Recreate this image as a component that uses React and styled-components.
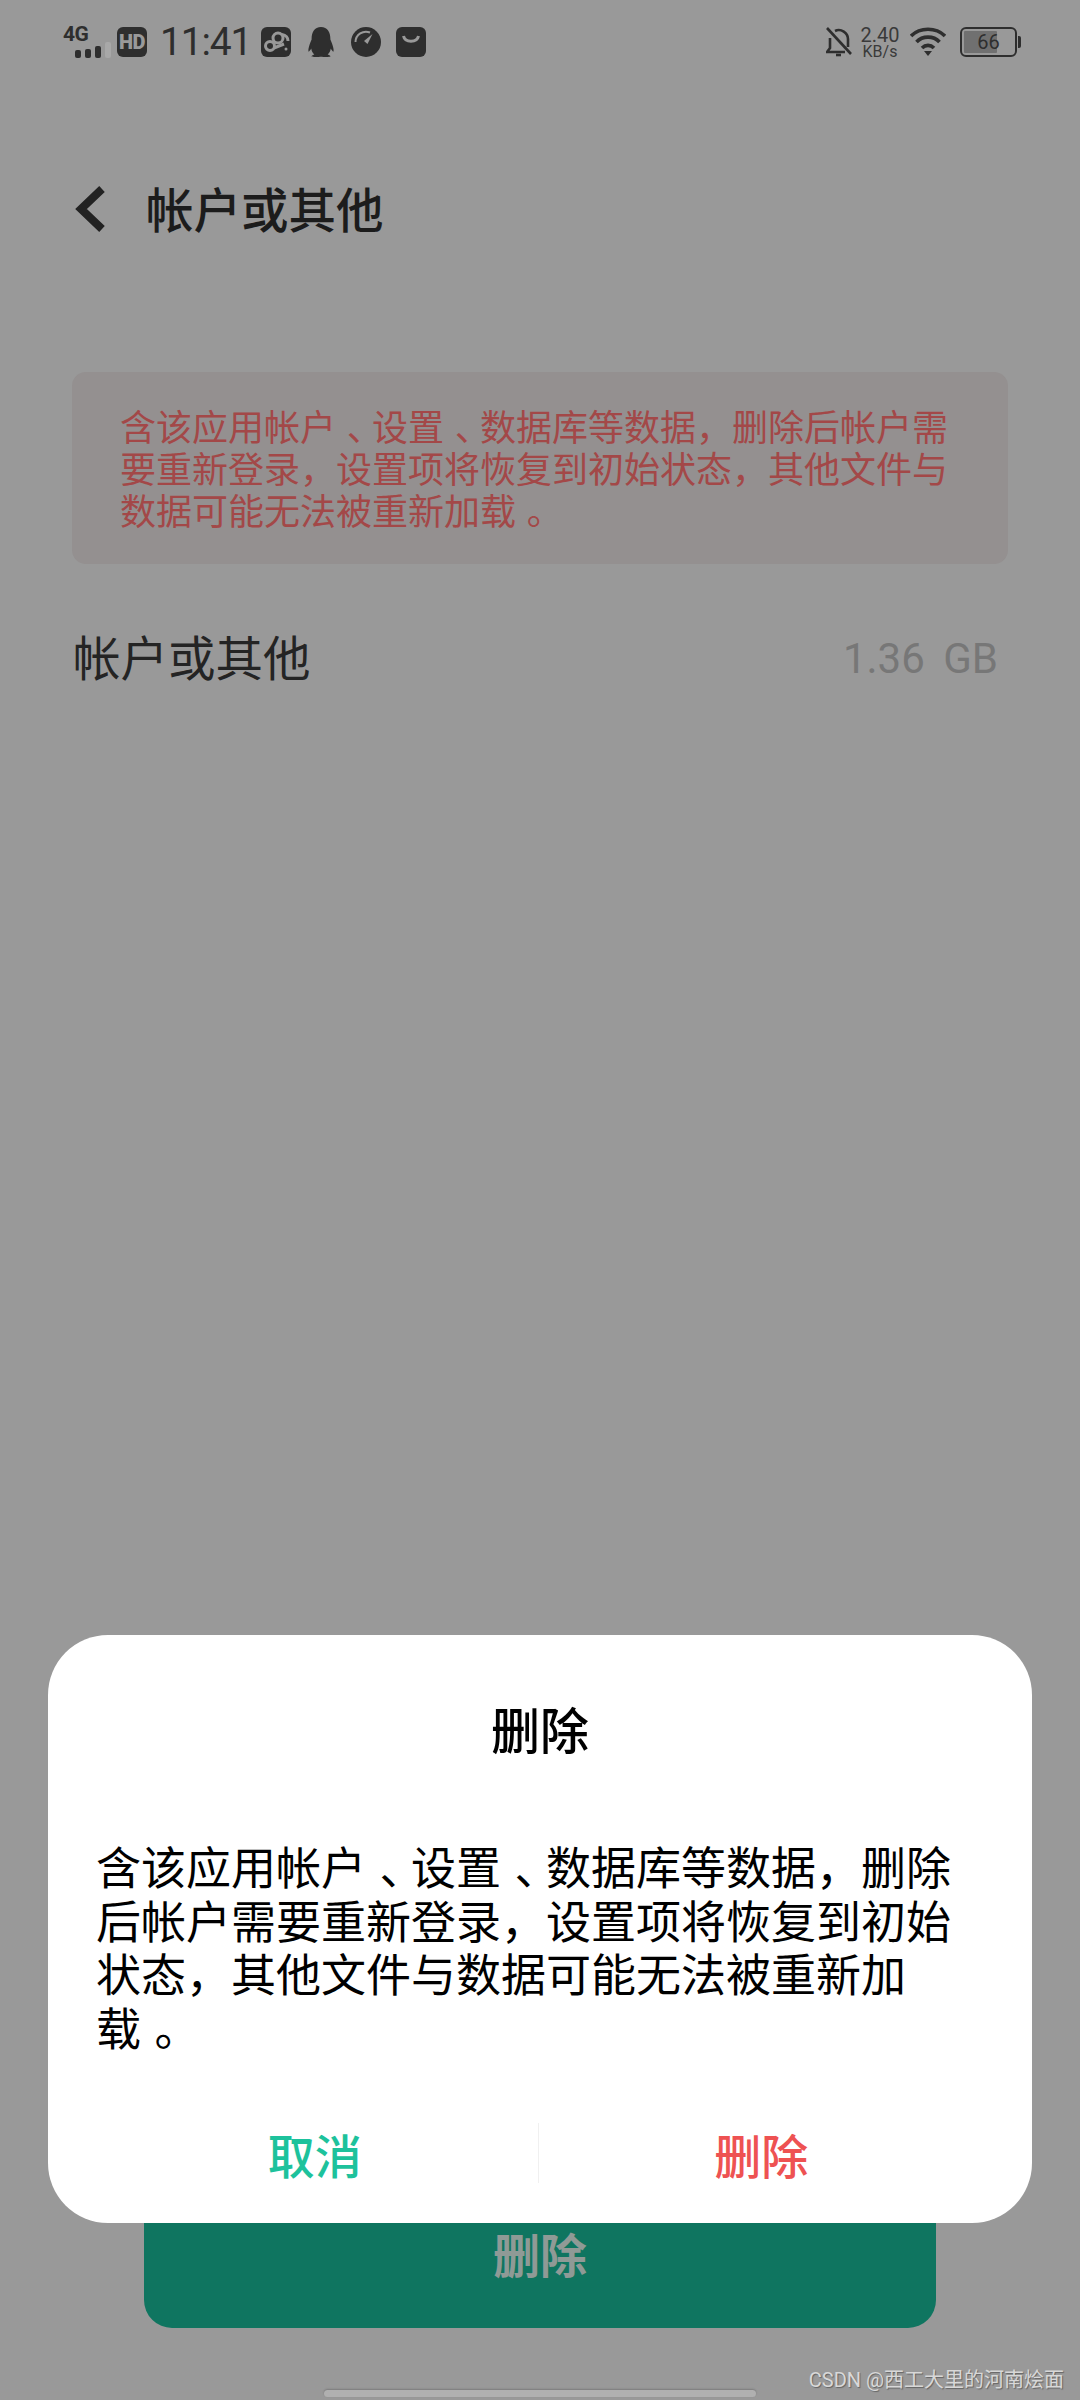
import React from 'react';
import styled, { createGlobalStyle } from 'styled-components';
import { FaQq } from 'react-icons/fa';

const GlobalStyle = createGlobalStyle`
  html, body {
    margin: 0;
    padding: 0;
    background-color: #999999;
  }
  * {
    box-sizing: border-box;
  }
`;

const CJK = `Roboto, "Noto Sans CJK SC", sans-serif`;

const Screen = styled.div`
  position: relative;
  display: flex;
  flex-direction: column;
  width: 1080px;
  height: 2400px;
  overflow: hidden;
  background-color: #999999;
  font-family: ${CJK};
  color: #1c1c1c;
`;

const StatusBar = styled.div`
  display: flex;
  align-items: center;
  justify-content: space-between;
  height: 84px;
  padding: 0 63px 0 63px;
  color: #2e2e2e;
`;
const StatusGroup = styled.div`
  display: flex;
  align-items: center;
`;
const Network = styled.div`
  display: flex;
  flex-direction: column;
  align-items: flex-start;
  width: 48px;
  height: 32px;
  margin-right: 6px;
`;
const NetworkLabel = styled.span`
  font-size: 21px;
  font-weight: 700;
  line-height: 16px;
  letter-spacing: -0.5px;
`;
const Signal = styled.div`
  display: flex;
  gap: 4px;
  align-items: flex-end;
  height: 16px;
  margin-left: 12px;
`;
const SignalBar = styled.span`
  width: 6px;
  border-radius: 2px;
  height: ${(props) => props.h}px;
  background-color: ${(props) => (props.off ? '#a8a8a8' : '#2e2e2e')};
`;
const HdBadge = styled.div`
  display: flex;
  align-items: center;
  justify-content: center;
  width: 30px;
  height: 30px;
  border-radius: 6px;
  background-color: #2e2e2e;
  color: #999999;
  font-size: 20px;
  font-weight: 900;
  letter-spacing: -0.5px;
`;
const Clock = styled.span`
  width: 86px;
  margin: 0 15px 0 13px;
  font-size: 39px;
  line-height: 40px;
  letter-spacing: -1.2px;
  white-space: nowrap;
`;
const AppIcons = styled.div`
  display: flex;
  align-items: center;
  gap: 15px;
  color: #2e2e2e;
  svg {
    display: block;
  }
`;
const Speed = styled.div`
  display: flex;
  flex-direction: column;
  align-items: center;
  width: 42px;
  margin: 0 9px 0 7px;
  color: #3a3a3a;
`;
const SpeedValue = styled.span`
  font-size: 20px;
  line-height: 19px;
`;
const SpeedUnit = styled.span`
  font-size: 16px;
  line-height: 14px;
`;
const Battery = styled.div`
  position: relative;
  display: flex;
  align-items: center;
  justify-content: center;
  width: 57px;
  height: 30px;
  margin-left: 14px;
  border: 2px solid #2e2e2e;
  border-radius: 6px;
  font-size: 20px;
  &::after {
    content: '';
    position: absolute;
    right: -6px;
    top: 7px;
    width: 3px;
    height: 12px;
    border-radius: 0 2px 2px 0;
    background-color: #2e2e2e;
  }
`;
const BatteryFill = styled.span`
  position: absolute;
  left: 2px;
  top: 2px;
  bottom: 2px;
  background-color: #707070;
  border-radius: 1px;
`;
const BatteryText = styled.span`
  position: relative;
  line-height: 20px;
`;

const Header = styled.div`
  display: flex;
  align-items: center;
  gap: 41px;
  height: 100px;
  margin-top: 75px;
  padding-left: 75px;
`;
const HeaderTitle = styled.h1`
  margin: 0;
  padding-top: 5px;
  font-size: 47.5px;
  font-weight: 500;
  line-height: 60px;
`;

const Notice = styled.div`
  display: flex;
  align-items: center;
  height: 192px;
  margin: 113px 72px 0 72px;
  padding: 5px 48px 0 48px;
  border-radius: 14px;
  background-color: #949090;
  color: #a34848;
  font-size: 36px;
  line-height: 42px;
`;
const TextLine = styled.div`
  white-space: nowrap;
`;

// 、 and 。 sit mid-cell in the reference font: half-width glyph plus padding keeps the 1em advance
const Punct = styled.span`
  font-feature-settings: "halt";
  padding-left: 0.3em;
  padding-right: 0.2em;
`;

const Row = styled.div`
  display: flex;
  align-items: center;
  justify-content: space-between;
  height: 100px;
  margin-top: 44px;
  padding: 0 82px 0 73px;
`;
const RowLabel = styled.span`
  margin-top: -6px;
  font-size: 47.5px;
  color: #242424;
`;
const RowValue = styled.span`
  font-size: 42px;
  color: #777777;
  word-spacing: 8px;
`;

const PrimaryButton = styled.div`
  display: flex;
  align-items: center;
  justify-content: center;
  width: 792px;
  height: 140px;
  margin: auto 144px 62px;
  padding-bottom: 11px;
  border-radius: 0 0 28px 28px;
  background-color: #0f7560;
  color: #8f9a96;
  font-size: 47px;
  font-weight: 700;
`;

const HomeBar = styled.div`
  width: 432px;
  height: 7px;
  margin: 0 auto 3px;
  border-radius: 4px;
  background-color: #b0b0b0;
  box-shadow: 0 -1px 2px rgba(0, 0, 0, 0.2);
`;

const Watermark = styled.div`
  position: absolute;
  right: 16px;
  bottom: 8px;
  color: #d8d8d8;
  font-size: 20px;
  line-height: 24px;
  text-shadow: 1px 1px 1px rgba(0, 0, 0, 0.35);
`;

const Dialog = styled.div`
  position: absolute;
  left: 48px;
  right: 48px;
  top: 1635px;
  display: flex;
  flex-direction: column;
  height: 588px;
  padding-top: 68px;
  border-radius: 60px;
  background-color: #ffffff;
  color: #000000;
`;
const DialogTitle = styled.div`
  font-size: 49px;
  font-weight: 500;
  line-height: 60px;
  text-align: center;
`;
const DialogBody = styled.div`
  margin-top: 80px;
  padding: 0 72px 0 48px;
  font-size: 45px;
  line-height: 53.5px;
`;
const DialogActions = styled.div`
  display: flex;
  align-items: center;
  height: 60px;
  margin-top: 66px;
`;
const DialogAction = styled.div`
  flex: 1;
  padding: ${(props) => props.pad};
  color: ${(props) => props.color};
  font-size: 47px;
  font-weight: 500;
  text-align: center;
`;
const ActionDivider = styled.span`
  width: 1px;
  height: 60px;
  background-color: #f0f0f0;
`;

const CloudIcon = () => (
  <svg width="30" height="30" viewBox="0 0 30 30">
    <rect width="30" height="30" rx="6" fill="#2e2e2e" />
    <circle cx="9" cy="19" r="4.5" fill="none" stroke="#999999" strokeWidth="3" />
    <circle cx="17" cy="11" r="5" fill="none" stroke="#999999" strokeWidth="3" />
    <path d="M12 15.5 L14 14 M21 7.5 C25 8 27 11 27 14 M13 21 L23 17" fill="none" stroke="#999999" strokeWidth="3" />
    <circle cx="25" cy="22" r="1.5" fill="#999999" />
  </svg>
);

const GaugeIcon = () => (
  <svg width="30" height="30" viewBox="0 0 30 30">
    <circle cx="15" cy="15" r="15" fill="#2e2e2e" />
    <path d="M4.5 15 A10.5 10.5 0 0 1 19 5.5" fill="none" stroke="#999999" strokeWidth="2" />
    <path d="M13 14 L21.5 7 L16.5 17 Z" fill="#999999" />
  </svg>
);

const BagIcon = () => (
  <svg width="30" height="30" viewBox="0 0 30 30">
    <rect width="30" height="30" rx="6" fill="#2e2e2e" />
    <path d="M7.5 9 C9 16 21 16 22.5 9" fill="none" stroke="#999999" strokeWidth="3" />
  </svg>
);

const BellOffIcon = () => (
  <svg width="26" height="30" viewBox="0 0 26 30" fill="none" stroke="#2e2e2e" strokeWidth="2.6">
    <path d="M4 11 V21 L1 25 H19" />
    <path d="M9 4 C15 1 22 6 22 12 V20" />
    <path d="M10 28 H15" />
    <path d="M1 1 L25 27" />
  </svg>
);

const WifiIcon = () => (
  <svg width="36" height="30" viewBox="0 0 36 30" fill="none" stroke="#2e2e2e" strokeWidth="3.6">
    <path d="M1 9 C10 0 26 0 35 9" />
    <path d="M6.5 15 C12.5 8.5 23.5 8.5 29.5 15" />
    <path d="M12 21 C15.5 17.5 20.5 17.5 24 21" />
    <path d="M14 24 L18 29 L22 24 Z" fill="#2e2e2e" stroke="none" />
  </svg>
);

const BackIcon = () => (
  <svg width="30" height="46" viewBox="0 0 30 46" fill="none" stroke="#222222" strokeWidth="8">
    <path d="M27 3 L6 23 L27 43" />
  </svg>
);

const noticeLines = [
  '含该应用帐户、设置、数据库等数据，删除后帐户需',
  '要重新登录，设置项将恢复到初始状态，其他文件与',
  '数据可能无法被重新加载。',
];
const dialogLines = [
  '含该应用帐户、设置、数据库等数据，删除',
  '后帐户需要重新登录，设置项将恢复到初始',
  '状态，其他文件与数据可能无法被重新加',
  '载。',
];

const Message = ({ lines }) => lines.map((line) => (
  <TextLine key={line}>
    {line.split(/([、。])/).map((part, i) => (
      i % 2 ? <Punct key={i}>{part}</Punct> : part
    ))}
  </TextLine>
));

const App = () => (
  <>
    <GlobalStyle />
    <Screen>
      <StatusBar>
        <StatusGroup>
          <Network>
            <NetworkLabel>4G</NetworkLabel>
            <Signal>
              <SignalBar h={8} />
              <SignalBar h={9} />
              <SignalBar h={12} />
              <SignalBar h={16} off />
            </Signal>
          </Network>
          <HdBadge>HD</HdBadge>
          <Clock>11:41</Clock>
          <AppIcons>
            <CloudIcon />
            <FaQq size={30} />
            <GaugeIcon />
            <BagIcon />
          </AppIcons>
        </StatusGroup>
        <StatusGroup>
          <BellOffIcon />
          <Speed>
            <SpeedValue>2.40</SpeedValue>
            <SpeedUnit>KB/s</SpeedUnit>
          </Speed>
          <WifiIcon />
          <Battery>
            <BatteryFill style={{ width: `${66 * 0.5}px` }} />
            <BatteryText>66</BatteryText>
          </Battery>
        </StatusGroup>
      </StatusBar>

      <Header>
        <BackIcon />
        <HeaderTitle>帐户或其他</HeaderTitle>
      </Header>

      <Notice>
        <div><Message lines={noticeLines} /></div>
      </Notice>

      <Row>
        <RowLabel>帐户或其他</RowLabel>
        <RowValue>1.36 GB</RowValue>
      </Row>

      <PrimaryButton>删除</PrimaryButton>
      <HomeBar />
      <Watermark>CSDN @西工大里的河南烩面</Watermark>

      <Dialog>
        <DialogTitle>删除</DialogTitle>
        <DialogBody><Message lines={dialogLines} /></DialogBody>
        <DialogActions>
          <DialogAction color="#1dc29c" pad="0 0 0 44px">取消</DialogAction>
          <ActionDivider />
          <DialogAction color="#ee5252" pad="0 48px 0 0">删除</DialogAction>
        </DialogActions>
      </Dialog>
    </Screen>
  </>
);

export default App;
